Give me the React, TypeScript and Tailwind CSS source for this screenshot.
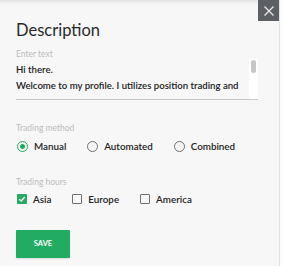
import { useState } from "react";

const METHODS = ["Manual", "Automated", "Combined"];
const HOURS = ["Asia", "Europe", "America"];

function Radio({ checked }: { checked: boolean }) {
  return (
    <span
      className={`flex h-[11px] w-[11px] items-center justify-center rounded-full border-[1.5px] ${
        checked ? "border-[#22ac62]" : "border-[#6f6f6f]"
      }`}
    >
      {checked && <span className="h-[5px] w-[5px] rounded-full bg-[#22ac62]" />}
    </span>
  );
}

function Check({ checked }: { checked: boolean }) {
  if (checked) {
    return (
      <span className="flex h-[10px] w-[10px] items-center justify-center rounded-[1px] bg-[#22ac62]">
        <svg viewBox="0 0 10 10" className="h-[8px] w-[8px]" fill="none" stroke="white" strokeWidth="1.6">
          <path d="M1.5 5.2 L4 7.5 L8.5 2.5" />
        </svg>
      </span>
    );
  }
  return <span className="h-[10px] w-[10px] rounded-[1px] border-[1.5px] border-[#6f6f6f]" />;
}

export default function App() {
  const [method, setMethod] = useState("Manual");
  const [hours, setHours] = useState<string[]>(["Asia"]);

  const toggleHour = (h: string) =>
    setHours((prev) => (prev.includes(h) ? prev.filter((x) => x !== h) : [...prev, h]));

  return (
    <div
      className="flex h-[266px] w-[283px] bg-[#fcfcfc] text-[#222]"
      style={{ fontFamily: "Lato, 'Open Sans', sans-serif" }}
    >
      <div className="relative h-full w-[280px] border-r border-[#e3e3e3] bg-[#f7f7f7] px-4 shadow-[inset_0_5px_6px_-5px_rgba(0,0,0,0.15)]">
        <button className="absolute right-0 top-0 flex h-[21px] w-[21px] items-center justify-center bg-[#5c6064]">
          <svg viewBox="0 0 10 10" className="h-[10px] w-[10px]" stroke="#e8e8e8" strokeWidth="1.3">
            <path d="M0.5 0.5 L9.5 9.5 M9.5 0.5 L0.5 9.5" />
          </svg>
        </button>

        <h1 className="pt-[18px] text-[16.5px] leading-[24px] font-normal text-[#2a2a2a]">Description</h1>

        <p className="mt-[8px] text-[8.5px] leading-[9px] text-[#bcbcbc]">Enter text</p>

        <div className="flex h-[41px] w-[242px] border-b border-[#c9c9c9]">
          <div className="flex-1 overflow-hidden pt-[3px] text-[9.6px] leading-[16px] font-semibold text-[#202020]">
            <p>Hi there.</p>
            <p className="whitespace-nowrap">Welcome to my profile. I utilizes position trading and</p>
            <p className="mt-[2px] whitespace-nowrap">swing trading to follow the medium-term market trends.</p>
          </div>
          <div className="ml-[3px] w-[9px] bg-white pt-px">
            <div className="mx-auto h-[13px] w-[5px] rounded-full bg-[#c6c6c6]" />
          </div>
        </div>

        <p className="mt-[24px] text-[8.5px] leading-[9px] text-[#bcbcbc]">Trading method</p>
        <div className="mt-[6px] flex h-[14px] items-center gap-[21px] pl-px">
          {METHODS.map((m) => (
            <label key={m} className="flex cursor-pointer items-center gap-[6px]" onClick={() => setMethod(m)}>
              <Radio checked={method === m} />
              <span className="text-[9.8px] font-semibold">{m}</span>
            </label>
          ))}
        </div>

        <p className="mt-[25px] text-[8.5px] leading-[9px] text-[#bcbcbc]">Trading hours</p>
        <div className="mt-[5px] flex h-[14px] items-center gap-[21px] pl-px">
          {HOURS.map((h) => (
            <label key={h} className="flex cursor-pointer items-center gap-[6px]" onClick={() => toggleHour(h)}>
              <Check checked={hours.includes(h)} />
              <span className="text-[9.8px] font-semibold">{h}</span>
            </label>
          ))}
        </div>

        <button className="mt-[24px] flex h-[28px] w-[54px] items-center justify-center rounded-[1px] bg-[#22ac62] text-[7.5px] font-bold text-white shadow-[0_1px_2px_rgba(0,0,0,0.12)]">
          SAVE
        </button>
      </div>
    </div>
  );
}
